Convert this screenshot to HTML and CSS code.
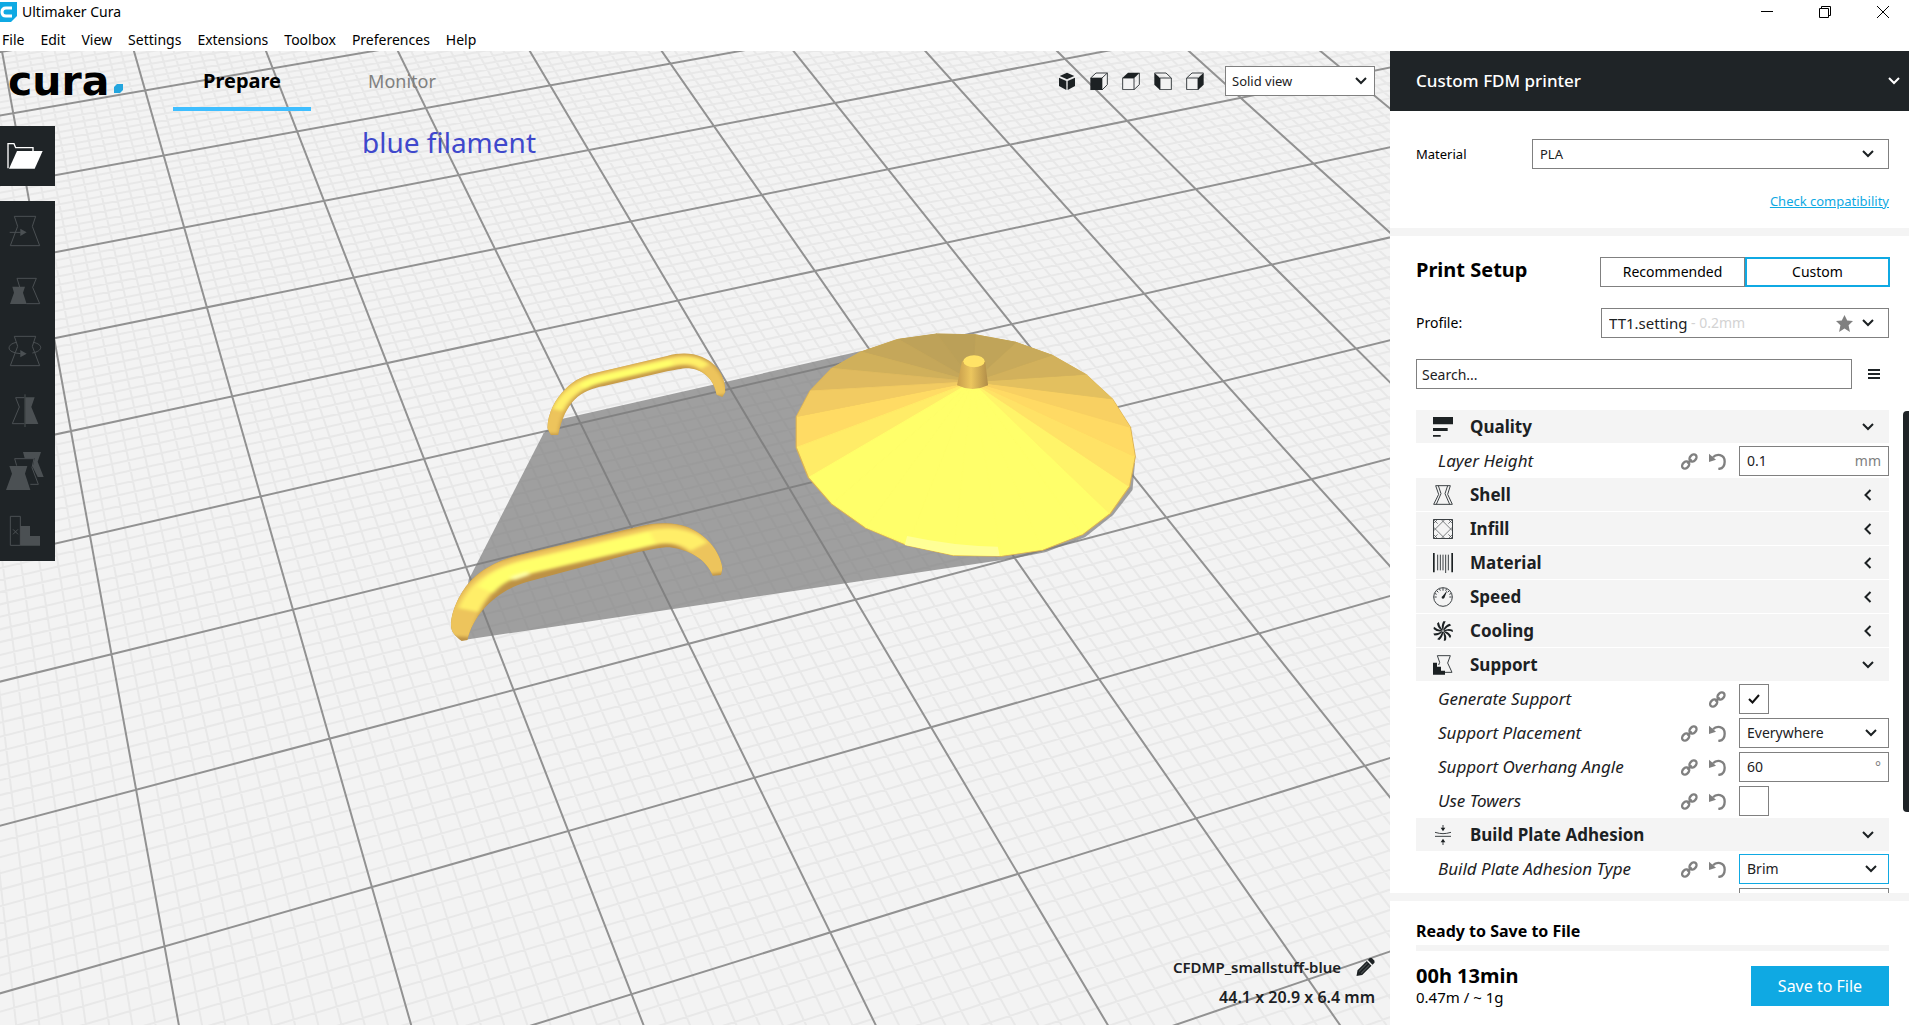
FILE: index.html
```html
<!DOCTYPE html>
<html lang="en">
<head>
<meta charset="utf-8">
<title>Ultimaker Cura</title>
<link rel="stylesheet" href="styles.css">
</head>
<body>
<svg class="defs" aria-hidden="true">
  <symbol id="i-down" viewBox="0 0 12 12"><path d="M1 3 6 8 11 3" fill="none" stroke="currentColor" stroke-width="2"/></symbol>
  <symbol id="i-left" viewBox="0 0 12 12"><path d="M8.500 1 3.500 6 8.500 11" fill="none" stroke="currentColor" stroke-width="2"/></symbol>
  <symbol id="i-link" viewBox="0 0 51 51"><g fill="none" stroke="currentColor" stroke-width="7"><ellipse cx="36" cy="15" rx="12" ry="9" transform="rotate(-45 36 15)"/><ellipse cx="14" cy="36" rx="12" ry="9" transform="rotate(-45 14 36)"/><path d="M19 32 32 19"/></g></symbol>
  <symbol id="i-reset" viewBox="0 0 51 51"><path d="M12 13C22 2 47 2 47 26C47 39 39 47 28 48" fill="none" stroke="currentColor" stroke-width="7"/><path d="M0 2V27L21 20Z" fill="currentColor"/></symbol>
</svg>

<header class="titlebar">
  <svg class="app-icon" viewBox="0 0 17 20"><path d="M0 0H17V14L11 20H0Z" fill="#0fa9e3"/><path d="M12 6H6Q2 6 2 10Q2 14 6 14H12" fill="none" stroke="#fff" stroke-width="3"/></svg>
  <h1>Ultimaker Cura</h1>
  <div class="window-controls">
    <button aria-label="Minimize"><svg viewBox="0 0 12 12"><path d="M0 5.500H12"/></svg></button>
    <button aria-label="Restore"><svg viewBox="0 0 12 12"><path d="M.5 2.500H9.500V11.500H.5ZM2.500 2.500V.5H11.500V9.500H9.500"/></svg></button>
    <button aria-label="Close"><svg viewBox="0 0 12 12"><path d="M0 0 12 12M12 0 0 12"/></svg></button>
  </div>
</header>

<nav class="menubar">
  <button>File</button><button>Edit</button><button>View</button><button>Settings</button><button>Extensions</button><button>Toolbox</button><button>Preferences</button><button>Help</button>
</nav>

<div class="workspace">
  <main class="viewport">
    <svg class="scene" viewBox="0 51 1390 974" preserveAspectRatio="xMinYMin slice" role="img" aria-label="Build plate with two handles and a lid">
      <defs>
        <linearGradient id="knob" x1="0" x2="1"><stop offset="0" stop-color="#c79d4c"/><stop offset=".45" stop-color="#ecc65e"/><stop offset="1" stop-color="#b08c48"/></linearGradient>
        <filter id="soft" x="-10%" y="-10%" width="120%" height="120%"><feGaussianBlur stdDeviation="4"/></filter>
        <clipPath id="big"><path id="big-shape" d="M64 915C64 870 86 810 106 780C130 745 165 718 205 705L450 620C490 606 525 606 553 622C590 645 618 690 624 745L621 765L604 767C592 725 565 692 515 682C495 682 470 690 440 700L220 786C170 806 112 870 98 960L86 963C72 948 64 935 64 915Z"/></clipPath>
        <clipPath id="small"><path id="small-shape" d="M263 325C263 280 280 235 300 207C318 180 340 164 370 156L510 108C535 98 560 98 582 111C610 128 630 165 630 215L624 231L612 224C607 185 590 150 555 145C540 144 530 150 510 154L380 198C330 210 300 245 285 345H270Z"/></clipPath>
      </defs>
      <path id="grid-minor" class="grid-minor"/>
      <path id="grid-major" class="grid-major"/>
      <!-- model space of the three meshes -->
      <g transform="translate(420 320) scale(.4847 .3333)">
        <path class="shadow" d="M908 94 290 298 255 340 100 780 90 960 1225 715 1290 697 1372 652 1430 585 1470 510 1475 430Z"/>
        <use href="#small-shape" fill="#c69b48"/>
        <g clip-path="url(#small)"><g fill="none" filter="url(#soft)">
          <path d="M270 340C275 270 300 215 340 187C370 170 480 138 520 124C570 107 610 145 620 225" stroke="#edc45c" stroke-width="32"/>
          <path d="M284 270C300 220 335 190 375 176L515 128C545 118 570 118 588 140" stroke="#fff068" stroke-width="22"/>
          <path d="M335 200C350 184 365 178 385 173L520 128" stroke="#ffff6a" stroke-width="20"/>
        </g></g>
        <use href="#big-shape" fill="#bd9245"/>
        <g clip-path="url(#big)"><g fill="none" filter="url(#soft)">
          <path d="M78 950C85 870 120 790 170 754C210 730 440 660 490 642C550 630 600 690 612 760" stroke="#edc45c" stroke-width="60"/>
          <path d="M100 870C120 800 160 762 215 742L470 655C510 642 550 645 575 680" stroke="#ffee68" stroke-width="44"/>
          <path d="M135 810C155 775 180 756 225 740L480 654" stroke="#ffff6a" stroke-width="38"/>
          <path d="M190 776 224 760" stroke="#ffffa6" stroke-width="12"/>
        </g></g>
        <g id="lid"></g>
        <path d="M1005 648Q1100 678 1192 680L1196 708 1100 705 1000 675Z" fill="#ffff96"/>
        <path d="M1108 196 1118 125Q1142 92 1166 125L1172 196Q1140 218 1108 196Z" fill="url(#knob)"/>
        <ellipse cx="1143" cy="124" rx="22" ry="18" fill="#ffe266"/>
      </g>
    </svg>

    <div class="overlay">
      <div class="stage-bar">
        <div class="logo" role="img" aria-label="cura"><span>cura</span><svg viewBox="0 0 9 9"><path d="M3 0H9V6L6 9H0V3Z" fill="#23a5de"/></svg></div>
        <nav class="tabs"><button class="tab active">Prepare</button><button class="tab">Monitor</button></nav>
        <div class="camera">
          <button aria-label="3D view"><svg viewBox="0 0 54 54"><path class="f" d="M27 2 49 12 27 22 5 12ZM3 17 25 27V54L3 42ZM51 17 29 27V54L51 42Z"/></svg></button>
          <button aria-label="Front view"><svg viewBox="0 0 54 54"><path class="l" d="M2 18 18 3H52V38L36 54M36 18 52 3"/><path class="f" d="M1 17H37V54H1Z"/></svg></button>
          <button aria-label="Top view"><svg viewBox="0 0 54 54"><path class="l" d="M2 18H36V53H2ZM52 3V38L36 53"/><path class="f" d="M1 18 18 2H53L37 18Z"/></svg></button>
          <button aria-label="Left view"><svg viewBox="0 0 54 54"><path class="l" d="M18 18H52V53H18ZM2 3H36L52 18"/><path class="f" d="M1 2 18 18V54L1 38Z"/></svg></button>
          <button aria-label="Right view"><svg viewBox="0 0 54 54"><path class="l" d="M2 18H36V53H2ZM2 18 18 3H52"/><path class="f" d="M36 18 53 2V38L36 54Z"/></svg></button>
        </div>
        <div class="field view-mode"><select aria-label="View mode"><option>Solid view</option></select><svg class="chev"><use href="#i-down"/></svg></div>
      </div>
      <p class="note">blue filament</p>
      <div class="tools">
        <button class="open" aria-label="Open file"><svg viewBox="0 0 165 180"><path d="M24 127V53H42L47 65H99V76" fill="none" stroke="#fff" stroke-width="4"/><path d="M51 75H128L104 128H27Z" fill="#fff"/></svg></button>
        <div class="tool-group">
          <button aria-label="Move"><svg viewBox="0 0 165 180"><path class="l" d="M43 46H107L97 76 119 134H31L53 76ZM29 94H62"/><path class="f" d="M61 83 80 94 61 105Z"/></svg></button>
          <button aria-label="Scale"><svg viewBox="0 0 165 180"><path class="l" d="M59 78 51 52H109L98 79 119 128H79"/><path class="f" d="M37 77H75L69 95 80 129H30L42 95Z"/></svg></button>
          <button aria-label="Rotate"><svg viewBox="0 0 165 180"><path class="l" d="M43 46H107L97 76 119 134H31L53 76ZM50 64C26 68 20 84 36 92Q46 97 62 98M100 64C130 70 130 90 97 96"/><path class="f" d="M61 87 80 98 61 109Z"/></svg></button>
          <button aria-label="Mirror"><svg viewBox="0 0 165 180"><path class="l" d="M73 50H47L58 78 37 128H73M75 40V138"/><path class="f" d="M76 49H104L94 78 115 129H76Z"/></svg></button>
          <button aria-label="Per model settings"><svg viewBox="0 0 165 180"><path class="l" d="M50 74 44 53H102L96 80 115 130H91"/><path class="f" d="M28 75H82L75 98 91 147H18L36 98ZM69 33H123L113 62 131 108H113L98 78 104 52H74Z"/></svg></button>
          <button aria-label="Support blocker"><svg viewBox="0 0 165 180"><path class="l" d="M31 46H61V133H31ZM39 85 54 100M54 85 39 100"/><path class="f" d="M61 75H90V105H120V134H61Z"/></svg></button>
        </div>
      </div>
      <div class="object-info">
        <p>CFDMP_smallstuff-blue <button aria-label="Rename"><svg viewBox="0 0 54 54"><path class="f" d="M0 54 3 37 31 9 45 23 17 51ZM34 6 40 0H46L54 8V14L48 20Z"/><path d="M8 40 33 15M14 46 39 21" stroke="#f3f3f3" stroke-width="1"/></svg></button></p>
        <p class="size">44.1 x 20.9 x 6.4 mm</p>
      </div>
    </div>
  </main>

  <aside class="panel">
    <button class="machine"><span>Custom FDM printer</span><svg class="ic12"><use href="#i-down"/></svg></button>

    <section class="material">
      <div class="line"><label for="material">Material</label><div class="field wide"><select id="material"><option>PLA</option></select><svg class="chev"><use href="#i-down"/></svg></div></div>
      <a href="#compatibility">Check compatibility</a>
    </section>

    <section class="setup">
      <div class="line head"><h2>Print Setup</h2><div class="modes"><button>Recommended</button><button class="on">Custom</button></div></div>
      <div class="line"><label for="profile">Profile:</label><div class="field profile"><select id="profile"><option>TT1.setting</option></select><span class="sub">- 0.2mm</span><span class="trail"><svg class="star" viewBox="0 0 50 50"><path d="M25 0 33 16 50 18 37 30 41 50 25 40 9 50 13 30 0 18 17 16Z" fill="#808080"/></svg><svg class="ic12"><use href="#i-down"/></svg></span></div></div>
      <div class="line search"><input type="text" aria-label="Search settings" placeholder="Search..."><button aria-label="Setting visibility"><svg viewBox="0 0 12 12"><path d="M0 2H12M0 6H12M0 10H12" stroke="#1f2427" stroke-width="2"/></svg></button></div>
    </section>

    <div class="settings">
      <div class="list">
        <button class="cat"><svg viewBox="0 0 60 60"><path class="f" d="M0 0H60V22H0ZM0 33H44V42H0ZM0 54H23V59H0Z"/></svg><span>Quality</span><svg class="ic12"><use href="#i-down"/></svg></button>
        <div class="row"><label for="lh">Layer Height</label><svg class="act"><use href="#i-link"/></svg><svg class="act"><use href="#i-reset"/></svg><div class="field"><input type="text" id="lh" value="0.1"><span class="unit">mm</span></div></div>
        <button class="cat"><svg viewBox="0 0 60 60"><path class="l" d="M8 2H52L44 28 58 58H2L17 28ZM16 2 24 26 10 58M44 2 36 26 50 58"/></svg><span>Shell</span><svg class="ic12"><use href="#i-left"/></svg></button>
        <button class="cat"><svg viewBox="0 0 60 60"><path class="l" d="M1.500 1.500H58.500V58.500H1.500Z"/><path class="l thin" d="M1 36 36 1M1 24 36 59M24 1 59 36M24 59 59 24M1 14 14 1M46 1 59 14M1 46 14 59M46 59 59 46M1 1 14 14M59 1 46 14M1 59 14 46M59 59 46 46"/></svg><span>Infill</span><svg class="ic12"><use href="#i-left"/></svg></button>
        <button class="cat"><svg viewBox="0 0 60 60"><path class="f" d="M0 0H5V58H0ZM55 0H60V58H55Z"/><path class="l" d="M14 5V52M22 5V52M30 5V52M38 5V60M46 5V52"/></svg><span>Material</span><svg class="ic12"><use href="#i-left"/></svg></button>
        <button class="cat"><svg viewBox="0 0 60 60"><circle class="l" cx="30" cy="30" r="28"/><path class="l" d="M4 30H11M49 30H56M30 3V11M11 11 16 16M49 11 44 16M5 19 11 22M19 5 22 11M41 5 38 11M55 19 49 22"/><path class="f" d="M43 10 34 33Q30 37 26 33Q25 29 29 27Z"/></svg><span>Speed</span><svg class="ic12"><use href="#i-left"/></svg></button>
        <button class="cat"><svg viewBox="0 0 60 60" id="fan"></svg><span>Cooling</span><svg class="ic12"><use href="#i-left"/></svg></button>
        <button class="cat"><svg viewBox="0 0 60 60"><path class="l" d="M17 30 20 22 13 2H52L44 24 57 52H36"/><path class="f" d="M0 23H12V35H24V47H36V59H0Z"/></svg><span>Support</span><svg class="ic12"><use href="#i-down"/></svg></button>
        <div class="row"><label for="gs">Generate Support</label><svg class="act"><use href="#i-link"/></svg><div class="check"><input type="checkbox" id="gs" checked><svg viewBox="0 0 12 12"><path d="M1 6 4.500 9.500 11 2" fill="none" stroke="#111" stroke-width="2"/></svg></div></div>
        <div class="row"><label for="sp">Support Placement</label><svg class="act"><use href="#i-link"/></svg><svg class="act"><use href="#i-reset"/></svg><div class="field"><select id="sp"><option>Everywhere</option></select><svg class="chev"><use href="#i-down"/></svg></div></div>
        <div class="row"><label for="sa">Support Overhang Angle</label><svg class="act"><use href="#i-link"/></svg><svg class="act"><use href="#i-reset"/></svg><div class="field"><input type="text" id="sa" value="60"><span class="unit">°</span></div></div>
        <div class="row"><label for="ut">Use Towers</label><svg class="act"><use href="#i-link"/></svg><svg class="act"><use href="#i-reset"/></svg><div class="check"><input type="checkbox" id="ut"></div></div>
        <button class="cat"><svg viewBox="0 0 60 60"><path class="l" d="M30 0V10M30 50V60M6 22Q20 26 30 26T54 22M6 34H54"/><path class="f" d="M23 8H37L30 19ZM23 52H37L30 41Z"/></svg><span>Build Plate Adhesion</span><svg class="ic12"><use href="#i-down"/></svg></button>
        <div class="row"><label for="pa">Build Plate Adhesion Type</label><svg class="act"><use href="#i-link"/></svg><svg class="act"><use href="#i-reset"/></svg><div class="field focus"><select id="pa"><option>Brim</option></select><svg class="chev"><use href="#i-down"/></svg></div></div>
        <div class="row"><div class="field"><input type="text" aria-label="Brim width"></div></div>
      </div>
      <div class="track"><div class="thumb"></div></div>
    </div>

    <footer class="job">
      <h3>Ready to Save to File</h3>
      <div class="progress"></div>
      <div class="line"><div><p class="time">00h 13min</p><p class="usage">0.47m / ~ 1g</p></div><button class="save">Save to File</button></div>
    </footer>
  </aside>
</div>
<script src="scene.js"></script>
</body>
</html>
```
FILE: styles.css
```css
*{box-sizing:border-box}
body{margin:0;height:100vh;display:flex;flex-direction:column;overflow:hidden;background:#fff;color:#000;font:14px/20px "Noto Sans","Open Sans",sans-serif}
h1,h2,h3,p{margin:0;font-weight:400}
button,input,select{font:inherit;color:inherit;margin:0;padding:0;border:0;border-radius:0;background:none;outline:0}
svg{display:block;flex:none}
.defs{position:absolute;width:0;height:0}
.f{fill:#1c2123}
.l{fill:none;stroke:#3c4144;stroke-width:3}
.thin{stroke-width:2}

.titlebar{display:flex;align-items:center;height:24px;flex:none}
.app-icon{width:17px;height:20px}
.titlebar h1{font-size:14px;margin-left:5px;flex:1}
.window-controls{display:flex;gap:46px;padding-right:20px}
.window-controls svg{width:12px;height:12px;fill:none;stroke:#000}
.menubar{display:flex;align-items:center;gap:16px;height:27px;padding:4px 2px 0;flex:none}

.workspace{display:flex;flex:1;min-height:0}
.viewport{flex:1;min-width:0;display:grid;grid-template:minmax(0,1fr)/minmax(0,1fr);background:#f3f3f3;overflow:hidden}
.viewport>*{grid-area:1/1}
.scene{width:100%;height:100%}
.grid-minor{fill:none;stroke:#e8e8e8;stroke-width:2}
.grid-major{fill:none;stroke:#929292;stroke-width:2}
.shadow{fill:#7a7a7a;fill-opacity:.7}
.overlay{display:flex;flex-direction:column;align-items:flex-start}
.stage-bar{display:flex;align-items:center;align-self:stretch;height:60px;padding:0 15px 0 8px}
.logo{display:flex;align-items:flex-end;width:165px;gap:5px}
.logo span{font:bold 41px/40px "DejaVu Sans",sans-serif}
.logo svg{width:9px;height:9px;margin-bottom:8px}
.tabs{display:flex;gap:22px;flex:1;align-self:stretch}
.tab{width:138px;font-size:18px;color:#808080;border:solid transparent;border-width:4px 0}
.tab.active{font-weight:700;font-size:20px;color:#000;border-bottom-color:#3fbeff}
.camera{display:flex;gap:14px;margin-right:21px}
.camera svg{width:18px;height:18px}
.camera .l{fill:#f3f3f3}
.note{margin:12px 0 0 362px;font-size:28px;line-height:38px;height:3px;color:#3f48cc}
.tools{display:flex;flex-direction:column;gap:15px}
.tools button{display:block;background:#1f2427}
.tools svg{width:55px;height:60px}
.tool-group .l{stroke:#4b5053}
.tool-group .f{fill:#4b5053}
.object-info{margin:auto 15px 16px auto;display:grid;gap:6px;font-size:15px;line-height:24px;color:#1c2123}
.object-info p{display:flex;align-items:center;justify-content:flex-end;gap:15px;font-weight:600}
.object-info .size{font-size:16px}
.object-info svg{width:19px;height:18px}

.field{display:grid;width:150px;height:30px;border:1px solid #808080;background:#fff}
.field>*{grid-area:1/1;min-width:0}
.field select{appearance:none;padding:0 7px;width:100%;color:#1c2123}
.field input{padding:0 7px;width:100%;color:#1c2123}
.field.focus{border-color:#0fa9e3}
.chev,.ic12{width:12px;height:12px;color:#1c2123}
.chev{align-self:center;justify-self:end;margin-right:11px;pointer-events:none}
.unit{justify-self:end;align-self:center;margin-right:7px;color:#808080}
.view-mode{font-size:13px}
.view-mode select{padding:0 6px}
.view-mode .chev{margin-right:7px}

.panel{flex:0 0 519px;display:flex;flex-direction:column;min-height:0;background:#fff}
.machine{flex:none;display:flex;align-items:center;justify-content:space-between;height:60px;padding:0 9px 0 26px;background:#1f2427;color:#fff;font-size:17px;font-weight:500}
.machine .ic12{color:#fff}
.line{display:flex;align-items:center;justify-content:space-between}
.material{padding:28px 20px 17px 26px;font-size:13px;display:flex;flex-direction:column;gap:22px;border-bottom:8px solid #f4f4f4}
.material a{align-self:flex-end;color:#0fa9e3;line-height:20px}
.field.wide{width:357px}
.wide .chev{margin-right:14px}
.setup{padding:21px 20px 21px 26px;display:flex;flex-direction:column;gap:21px}
.head h2{font-size:20px;font-weight:700;margin-top:-5px}
.modes{display:flex;margin-right:-1px}
.modes button{width:145px;height:30px;border:1px solid #808080}
.modes .on{border:2px solid #0fa9e3}
.field.profile{width:288px;font-size:15px}
.sub{align-self:center;margin-left:89px;font-size:14px;color:#d3d3d3;pointer-events:none;justify-self:start}
.trail{display:flex;align-items:center;gap:9px;justify-self:end;align-self:center;margin-right:14px;pointer-events:none}
.star{width:17px;height:17px}
.search input{width:436px;height:30px;border:1px solid #808080;padding:0 5px}
.search input::placeholder{color:#1c2123;opacity:1}
.search button{margin-right:9px}
.search svg{width:12px;height:12px}

.settings{flex:1;min-height:0;display:flex;overflow:hidden}
.list{flex:1;padding-left:26px;color:#1c2123}
.cat{display:flex;align-items:center;width:100%;height:33px;margin-bottom:1px;padding:0 15px 0 17px;background:#f4f4f4;font-size:17px;font-weight:700;text-align:left}
.cat>svg:first-child{width:20px;height:20px;margin-right:17px}
.cat span{flex:1}
.row{display:flex;align-items:center;justify-content:flex-end;height:34px;padding-left:22px}
.row label{flex:1;font-size:17px;font-style:italic}
.act{width:17px;height:17px;color:#808080;margin-right:11px}
.field,.check{flex:none}
.row .field,.check{margin-left:2px}
.check{display:grid;width:150px}
.check>*{grid-area:1/1}
.check input{appearance:none;width:30px;height:30px;border:1px solid #808080}
.check svg{width:12px;height:12px;margin-left:9px;align-self:center;pointer-events:none}
.track{flex:0 0 20px}
.thumb{margin:1px 0 0 14px;height:83%;background:#1f2427;border-radius:4px 0 0 4px}

.job{flex:none;padding:20px 20px 18px 26px;border-top:8px solid #f4f4f4}
.job h3{font-size:16px;font-weight:700}
.progress{height:6px;margin:4px 0 14px;background:#f4f4f4}
.time{font-size:20px;line-height:22px;font-weight:700}
.usage{font-size:15px;line-height:20px}
.save{width:138px;height:40px;background:#0fa9e3;color:#fff;font-size:16px}
```
FILE: scene.js
```js
// Perspective of the build plate: maps plate units to view coordinates.
function project(u, v) {
  const s = (u - 1) / 5, t = (v - 1) / 6;
  const w = 1 + 0.09429 * s - 0.31144 * t;
  return [(184.2 + 729.5 * s + 71.9 * t) / w, (227.5 - 114.9 * s + 383.3 * t) / w];
}

function segment(a, b) {
  const [x1, y1] = project(...a), [x2, y2] = project(...b);
  return `M${x1.toFixed(1)} ${y1.toFixed(1)}L${x2.toFixed(1)} ${y2.toFixed(1)}`;
}

const U = [-3, 15], V = [-5, 13];
let minor = "", major = "";
for (let i = U[0] * 10; i <= U[1] * 10; i++) {
  const d = segment([i / 10, V[0]], [i / 10, V[1]]);
  if (i % 10) minor += d; else major += d;
}
for (let i = V[0] * 10; i <= V[1] * 10; i++) {
  const d = segment([U[0], i / 10], [U[1], i / 10]);
  if (i % 10) minor += d; else major += d;
}
document.getElementById("grid-minor").setAttribute("d", minor);
document.getElementById("grid-major").setAttribute("d", major);

// Lid: rim points with the shade of the facet that starts at each one.
const rim = [
  [775, 290, "#ffdb64"], [775, 383, "#ffec67"], [800, 473, "#ffff6a"], [848, 553, "#ffff6a"],
  [918, 625, "#ffff6a"], [1005, 678, "#ffff6a"], [1100, 708, "#ffff6a"], [1200, 710, "#ffff6a"],
  [1285, 692, "#ffff6a"], [1368, 645, "#ffff6a"], [1425, 582, "#fff469"], [1465, 500, "#ffe266"],
  [1477, 410, "#ffda64"], [1467, 322, "#f8d062"], [1430, 237, "#e3c05f"], [1375, 163, "#d2b15c"],
  [1305, 105, "#c8aa5b"], [1230, 66, "#c0a459"], [1145, 43, "#bba058"], [1065, 41, "#bea259"],
  [985, 57, "#c5a75a"], [908, 95, "#d0b05b"], [848, 145, "#dfba5f"], [803, 213, "#f2cb62"]
];
const apex = [1140, 185];
let lid = `<polygon fill="#dcb355" points="${rim.map(p => p[0] + "," + p[1]).join(" ")}"/>`;
rim.forEach((p, i) => {
  const q = rim[(i + 1) % rim.length];
  const pts = [apex, p, q].map((c, k) => k ? [apex[0] + (c[0] - apex[0]) * 0.99, apex[1] + (c[1] - apex[1]) * 0.993] : c);
  lid += `<polygon fill="${p[2]}" stroke="${p[2]}" stroke-width="2.5" stroke-linejoin="round" points="${pts.join(" ")}"/>`;
});
document.getElementById("lid").innerHTML = lid;

// Nine curved blades of the fan icon.
let fan = "";
for (let i = 0; i < 9; i++) {
  fan += `<path class="f" d="M29 28Q23 14 31 1H38Q31 12 31 27Z" transform="rotate(${i * 40} 30 30)"/>`;
}
document.getElementById("fan").innerHTML = fan;
```
